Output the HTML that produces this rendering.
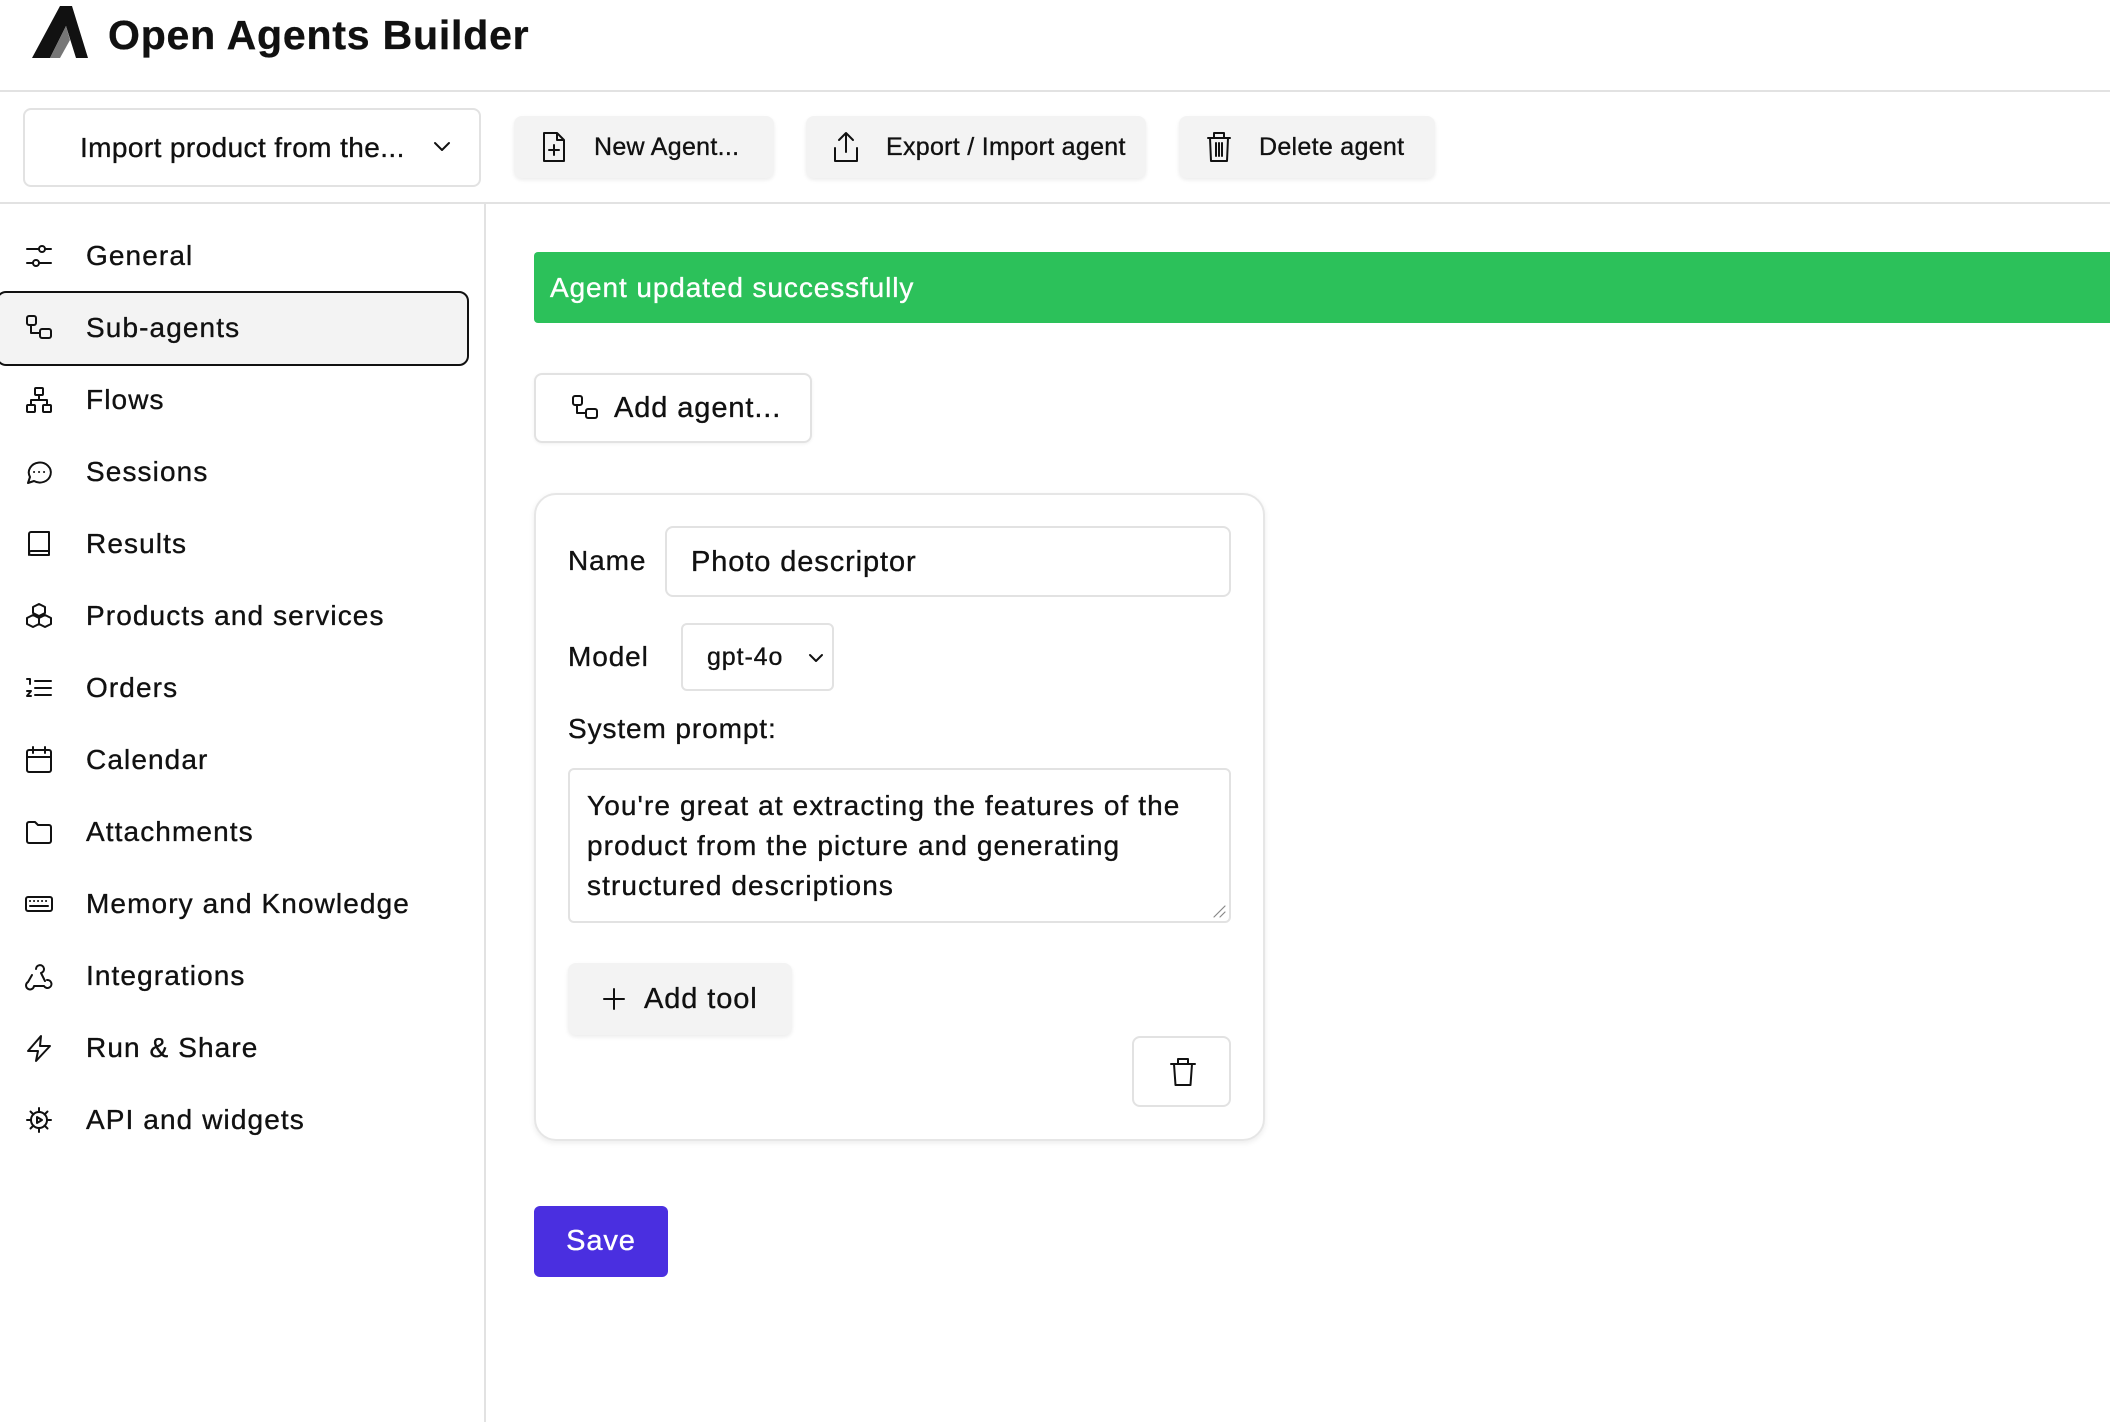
<!DOCTYPE html>
<html><head><meta charset="utf-8"><style>
*{box-sizing:border-box;margin:0;padding:0}
body{width:2110px;height:1422px;background:#fff;font-family:"Liberation Sans",sans-serif;color:#111;position:relative;overflow:hidden;letter-spacing:0.9px;-webkit-text-stroke:0.35px currentColor}
.abs{position:absolute}
.btn{position:absolute;background:#f3f3f3;border-radius:8px;box-shadow:0 2px 4px rgba(0,0,0,.08);display:flex;align-items:center;font-size:25px;color:#111;letter-spacing:0.3px}
.btn svg{margin-right:26px}
.nav{position:absolute;left:0;width:468px;height:72px;display:flex;align-items:center;font-size:28px;color:#111;letter-spacing:1.1px}
.nav svg{position:absolute;left:24px}
.nav span{position:absolute;left:86px}
svg{fill:none;stroke:#111;stroke-width:2;stroke-linecap:round;stroke-linejoin:round;-webkit-text-stroke:0}
</style></head><body>
<svg class="abs" style="left:30px;top:4px" width="66" height="56" viewBox="0 0 66 56"><polygon points="2,54 30,2 42,2 58,54 46,54 36,22 20,54" fill="#111" stroke="none"/><polygon points="20,54 36,22 40,36 30,54" fill="#777" stroke="none"/></svg>
<div class="abs" style="left:108px;top:12px;font-size:41px;font-weight:bold;letter-spacing:0.8px">Open Agents Builder</div>
<div class="abs" style="left:0;top:90px;width:2110px;height:2px;background:#e2e2e2"></div>
<div class="abs" style="left:23px;top:108px;width:458px;height:79px;border:2px solid #e2e2e2;border-radius:8px;display:flex;align-items:center;font-size:28px;padding-left:55px;letter-spacing:0.4px">Import product from the...
<svg style="position:absolute;left:408px;top:31px" width="18" height="12" viewBox="0 0 18 12"><path d="M2 2l7 7 7-7"/></svg></div>
<div class="btn" style="left:514px;top:116px;width:260px;height:62px;padding-left:26px"><svg width="28" height="32" viewBox="0 0 28 32"><path d="M4 2h13l7 7v21H4z M17 2v7h7 M14 14v10 M9 19h10"/></svg>New Agent...</div>
<div class="btn" style="left:806px;top:116px;width:340px;height:62px;padding-left:26px"><svg width="28" height="34" viewBox="0 0 28 34"><path d="M14 22V3 M7 10l7-7 7 7 M3 18v13h22V18"/></svg>Export / Import agent</div>
<div class="btn" style="left:1179px;top:116px;width:256px;height:62px;padding-left:26px"><svg width="28" height="34" viewBox="0 0 28 34"><path d="M3 8h22 M9 8V3h10v5 M5 8l1 23h16l1-23 M11 13v13 M14 13v13 M17 13v13"/></svg>Delete agent</div>
<div class="abs" style="left:0;top:202px;width:2110px;height:2px;background:#e2e2e2"></div>
<div class="abs" style="left:484px;top:204px;width:2px;height:1218px;background:#e2e2e2"></div>
<div class="abs" style="left:-4px;top:291px;width:473px;height:75px;border:2.5px solid #111;border-radius:10px;background:#f3f3f3"></div>
<div class="nav" style="top:220px"><svg width="30" height="30" viewBox="0 0 30 30"><path d="M3 8h12 M21 8h6 M3 22h6 M15 22h12"/><circle cx="18" cy="8" r="3"/><circle cx="12" cy="22" r="3"/></svg><span>General</span></div>
<div class="nav" style="top:292px"><svg width="30" height="30" viewBox="0 0 30 30"><rect x="3" y="3" width="9" height="9" rx="2"/><rect x="16" y="16" width="11" height="9" rx="2"/><path d="M7 12v8h9"/></svg><span>Sub-agents</span></div>
<div class="nav" style="top:364px"><svg width="30" height="30" viewBox="0 0 30 30"><rect x="11" y="3" width="8" height="7" rx="1"/><rect x="3" y="20" width="8" height="7" rx="1"/><rect x="19" y="20" width="8" height="7" rx="1"/><path d="M15 10v5 M7 20v-5h16v5"/></svg><span>Flows</span></div>
<div class="nav" style="top:436px"><svg width="30" height="30" viewBox="0 0 30 30"><path d="M4 26l2-6a11 10 0 1 1 4 4z"/><path d="M10 15h.1 M15 15h.1 M20 15h.1"/></svg><span>Sessions</span></div>
<div class="nav" style="top:508px"><svg width="30" height="30" viewBox="0 0 30 30"><path d="M5 26V5a2 2 0 0 1 2-2h18v23H7a2 2 0 0 1 0-4h18"/></svg><span>Results</span></div>
<div class="nav" style="top:580px"><svg width="30" height="30" viewBox="0 0 30 30"><path d="M15 3l6 3v6l-6 3-6-3V6z M9 14l6 3v6l-6 3-6-3v-6z M21 14l6 3v6l-6 3-6-3v-6z"/></svg><span>Products and services</span></div>
<div class="nav" style="top:652px"><svg width="30" height="30" viewBox="0 0 30 30"><path d="M11 8h16 M11 15h16 M11 22h16 M3 6h3v5 M3 18h4l-4 5h4"/></svg><span>Orders</span></div>
<div class="nav" style="top:724px"><svg width="30" height="30" viewBox="0 0 30 30"><rect x="3" y="5" width="24" height="22" rx="2"/><path d="M3 12h24 M9 2v6 M21 2v6"/></svg><span>Calendar</span></div>
<div class="nav" style="top:796px"><svg width="30" height="30" viewBox="0 0 30 30"><path d="M3 7a2 2 0 0 1 2-2h6l3 3h11a2 2 0 0 1 2 2v14a2 2 0 0 1-2 2H5a2 2 0 0 1-2-2z"/></svg><span>Attachments</span></div>
<div class="nav" style="top:868px"><svg width="30" height="30" viewBox="0 0 30 30"><rect x="2" y="8" width="26" height="14" rx="2"/><path d="M6 12h.1 M10 12h.1 M14 12h.1 M18 12h.1 M22 12h.1 M6 17h18"/></svg><span>Memory and Knowledge</span></div>
<div class="nav" style="top:940px"><svg width="30" height="30" viewBox="0 0 30 30"><path d="M12 8a4 4 0 1 1 5 4l4 8 M8 14l-4 7a4 4 0 1 0 6 4h10a4 4 0 1 0 3-6"/></svg><span>Integrations</span></div>
<div class="nav" style="top:1012px"><svg width="30" height="30" viewBox="0 0 30 30"><path d="M17 3L4 18h10l-2 10 14-15H16z"/></svg><span>Run &amp; Share</span></div>
<div class="nav" style="top:1084px"><svg width="30" height="30" viewBox="0 0 30 30"><circle cx="15" cy="15" r="8"/><path d="M15 3v4 M15 23v4 M3 15h4 M23 15h4 M6.5 6.5l3 3 M20.5 20.5l3 3 M6.5 23.5l3-3 M20.5 9.5l3-3 M13 12l5 3-5 3z"/></svg><span>API and widgets</span></div>
<div class="abs" style="left:534px;top:252px;width:1580px;height:71px;background:#2cc15a;border-radius:4px 0 0 4px;color:#fff;font-size:28px;padding:20px 0 0 16px">Agent updated successfully</div>
<div class="abs" style="left:534px;top:373px;width:278px;height:70px;border:2px solid #e2e2e2;border-radius:8px;font-size:29px;display:flex;align-items:center;padding-left:34px;box-shadow:0 1px 3px rgba(0,0,0,.06)"><svg width="30" height="30" viewBox="0 0 30 30" style="margin-right:14px"><rect x="3" y="3" width="9" height="9" rx="2"/><rect x="16" y="16" width="11" height="9" rx="2"/><path d="M7 12v8h9"/></svg>Add agent...</div>
<div class="abs" style="left:534px;top:493px;width:731px;height:648px;border:2px solid #e6e6e6;border-radius:22px;box-shadow:0 2px 6px rgba(0,0,0,.08)"></div>
<div class="abs" style="left:568px;top:545px;font-size:28px">Name</div>
<div class="abs" style="left:665px;top:526px;width:566px;height:71px;border:2px solid #e2e2e2;border-radius:8px;font-size:29px;padding:18px 0 0 24px">Photo descriptor</div>
<div class="abs" style="left:568px;top:641px;font-size:28px">Model</div>
<div class="abs" style="left:681px;top:623px;width:153px;height:68px;border:2px solid #e2e2e2;border-radius:6px;font-size:25px;padding:18px 0 0 24px">gpt-4o<svg style="position:absolute;left:125px;top:28px" width="16" height="10" viewBox="0 0 16 10"><path d="M2 2l6 6 6-6"/></svg></div>
<div class="abs" style="left:568px;top:713px;font-size:28px">System prompt:</div>
<div class="abs" style="left:568px;top:768px;width:663px;height:155px;border:2px solid #e2e2e2;border-radius:6px;font-size:28px;line-height:40px;padding:16px 0 0 17px;letter-spacing:1.1px">You're great at extracting the features of the<br>product from the picture and generating<br>structured descriptions
<svg style="position:absolute;right:3px;bottom:3px" width="14" height="14" viewBox="0 0 14 14"><path d="M2 13L13 2 M8 13l5-5" stroke="#888" stroke-width="1.2"/></svg></div>
<div class="btn" style="left:568px;top:963px;width:224px;height:72px;padding-left:34px;font-size:29px;letter-spacing:0.9px"><svg width="24" height="24" viewBox="0 0 24 24" style="margin-right:18px"><path d="M12 2v20 M2 12h20"/></svg>Add tool</div>
<div class="abs" style="left:1132px;top:1036px;width:99px;height:71px;border:2px solid #e2e2e2;border-radius:8px"><svg style="position:absolute;left:34px;top:18px" width="30" height="32" viewBox="0 0 30 32"><path d="M3 8h24 M10 8V3h10v5 M6 8l1.5 21h15L24 8"/></svg></div>
<div class="abs" style="left:534px;top:1206px;width:134px;height:71px;background:#4a2fe0;border-radius:6px;color:#fff;font-size:29px;text-align:center;line-height:71px">Save</div>
</body></html>
